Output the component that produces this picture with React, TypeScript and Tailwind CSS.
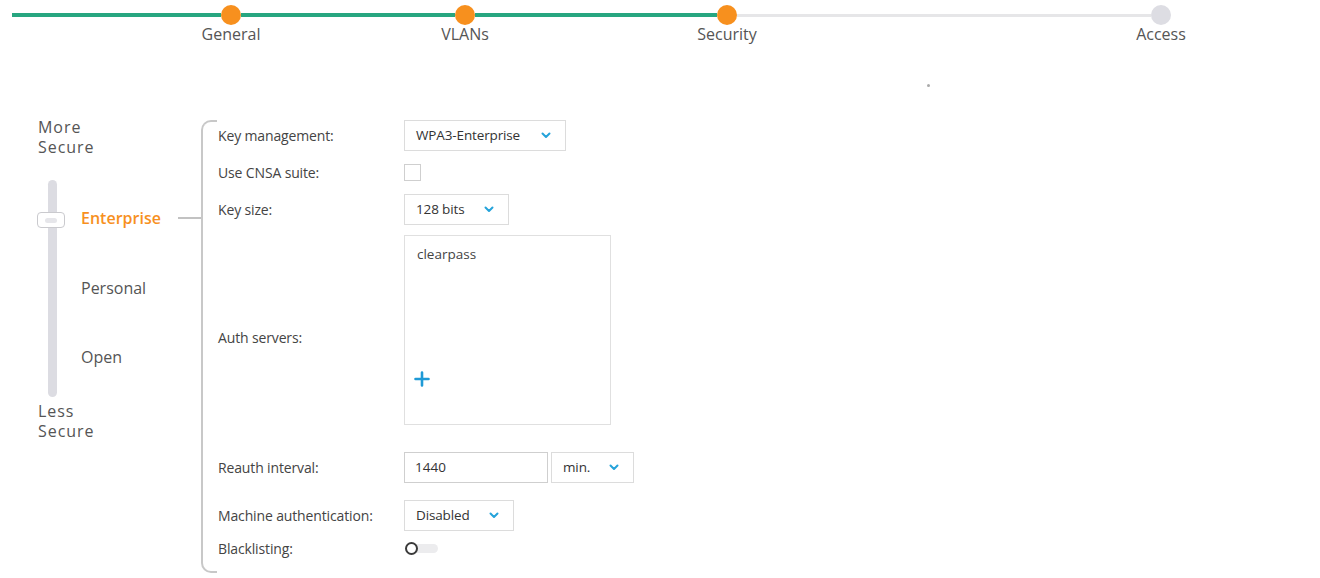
import React from 'react';

const font = { fontFamily: '"Open Sans", "Noto Sans", sans-serif' };

function Chevron() {
  return (
    <svg width="10" height="7" viewBox="0 0 10 7" className="shrink-0">
      <polyline points="1.5,1.5 5,5 8.5,1.5" fill="none" stroke="#25a3da" strokeWidth="2" strokeLinecap="round" strokeLinejoin="round" />
    </svg>
  );
}

function Select({ value, width }: { value: string; width: string }) {
  return (
    <div className={`${width} h-[31px] border border-[#dcdcdc] bg-white flex items-center justify-between pl-[11px] pr-[14px] text-[13.5px] text-[#333] tracking-[-0.01em]`}>
      <span>{value}</span>
      <Chevron />
    </div>
  );
}

function Step({ label, done }: { label: string; done: boolean }) {
  return (
    <div className={`relative w-5 h-5 rounded-full shrink-0 ${done ? 'bg-[#f7901e]' : 'bg-[#dddde3]'}`}>
      <div className="absolute top-[19px] left-1/2 -translate-x-1/2 whitespace-nowrap text-[16px] leading-[20px] text-[#555]">
        {label}
      </div>
    </div>
  );
}

function Row({ label, children, className = '' }: { label: string; children: React.ReactNode; className?: string }) {
  return (
    <div className={`flex items-center ${className}`}>
      <div className="w-[186px] shrink-0 text-[14px] text-[#444] tracking-[-0.01em]">{label}</div>
      {children}
    </div>
  );
}

export default function App() {
  return (
    <div className="w-[1320px] h-[578px] bg-white overflow-hidden" style={font}>
      {/* stepper */}
      <div className="relative h-[117px] pl-[12px] pt-[5px]">
        <div className="flex items-center">
          <div className="w-[209px] h-[4px] bg-[#27a680]" />
          <Step label="General" done />
          <div className="w-[214px] h-[4px] bg-[#27a680]" />
          <Step label="VLANs" done />
          <div className="w-[242px] h-[4px] bg-[#27a680]" />
          <Step label="Security" done />
          <div className="w-[414px] h-[3px] bg-[#e6e6e8]" />
          <Step label="Access" done={false} />
        </div>
        <div className="absolute left-[927px] top-[84px] w-[3px] h-[3px] rounded-full bg-[#aaa]" />
      </div>

      <div className="flex items-start">
        {/* security level slider */}
        <div className="w-[178px] shrink-0 pl-[38px]">
          <div className="text-[16px] leading-[20px] tracking-[0.06em] text-[#555]">
            More
            <br />
            Secure
          </div>
          <div className="flex mt-[23px]">
            <div className="relative ml-[10px] w-[9px] h-[217px] rounded-full bg-[#dcdce2] shrink-0">
              <div className="absolute left-[-11px] top-[32px] w-[28px] h-[16px] rounded-[4px] border border-[#cacace] bg-white flex items-center justify-center">
                <div className="w-[12px] h-[5px] rounded-sm bg-[#e6e6ea]" />
              </div>
            </div>
            <div className="ml-[24px] pt-[28px] text-[16px] leading-[20px] text-[#555]">
              <div className="font-semibold text-[#f7901e]">Enterprise</div>
              <div className="mt-[50px]">Personal</div>
              <div className="mt-[49px]">Open</div>
            </div>
          </div>
          <div className="mt-[4px] text-[16px] leading-[20px] tracking-[0.06em] text-[#555]">
            Less
            <br />
            Secure
          </div>
        </div>

        {/* connector */}
        <div className="w-[23px] shrink-0 mt-[100px] h-[2px] bg-[#c2c2c2]" />

        {/* bracket */}
        <div className="w-[16px] h-[453px] mt-[3px] shrink-0 border-l-2 border-t-2 border-b-2 border-[#c8c8c8] rounded-l-[10px]" />

        {/* form */}
        <div className="ml-[1px] mt-[3px] flex flex-col">
          <Row label="Key management:" className="h-[31px]">
            <Select value="WPA3-Enterprise" width="w-[162px]" />
          </Row>
          <Row label="Use CNSA suite:" className="h-[31px] mt-[6px]">
            <div className="w-[17px] h-[17px] border border-[#cfcfcf] bg-white" />
          </Row>
          <Row label="Key size:" className="h-[31px] mt-[6px]">
            <Select value="128 bits" width="w-[105px]" />
          </Row>
          <div className="flex items-start mt-[10px]">
            <div className="w-[186px] shrink-0 mt-[93px] text-[14px] leading-[19px] text-[#444] tracking-[-0.01em]">
              Auth servers:
            </div>
            <div className="w-[207px] h-[190px] border border-[#e0e0e0] bg-white flex flex-col pl-[12px] pt-[8px]">
              <div className="text-[13.5px] text-[#444]">clearpass</div>
              <svg width="16" height="16" viewBox="0 0 16 16" className="mt-[107px] ml-[-3px]">
                <path d="M8 1.5v13M1.5 8h13" stroke="#1f9ad6" strokeWidth="2.6" strokeLinecap="round" />
              </svg>
            </div>
          </div>
          <Row label="Reauth interval:" className="h-[31px] mt-[27px]">
            <div className="w-[144px] h-[31px] border border-[#cfcfcf] bg-white flex items-center pl-[10px] text-[13.5px] text-[#333]">
              1440
            </div>
            <div className="ml-[3px]">
              <Select value="min." width="w-[83px]" />
            </div>
          </Row>
          <Row label="Machine authentication:" className="h-[31px] mt-[17px]">
            <Select value="Disabled" width="w-[110px]" />
          </Row>
          <Row label="Blacklisting:" className="h-[17px] mt-[9px]">
            <div className="relative w-[34px] h-[14px] flex items-center">
              <div className="absolute left-[4px] right-0 h-[9px] rounded-full bg-[#ececee]" />
              <div className="relative w-[13px] h-[13px] rounded-full border-2 border-[#3a3a3a] bg-white ml-[1px]" />
            </div>
          </Row>
        </div>
      </div>
    </div>
  );
}
